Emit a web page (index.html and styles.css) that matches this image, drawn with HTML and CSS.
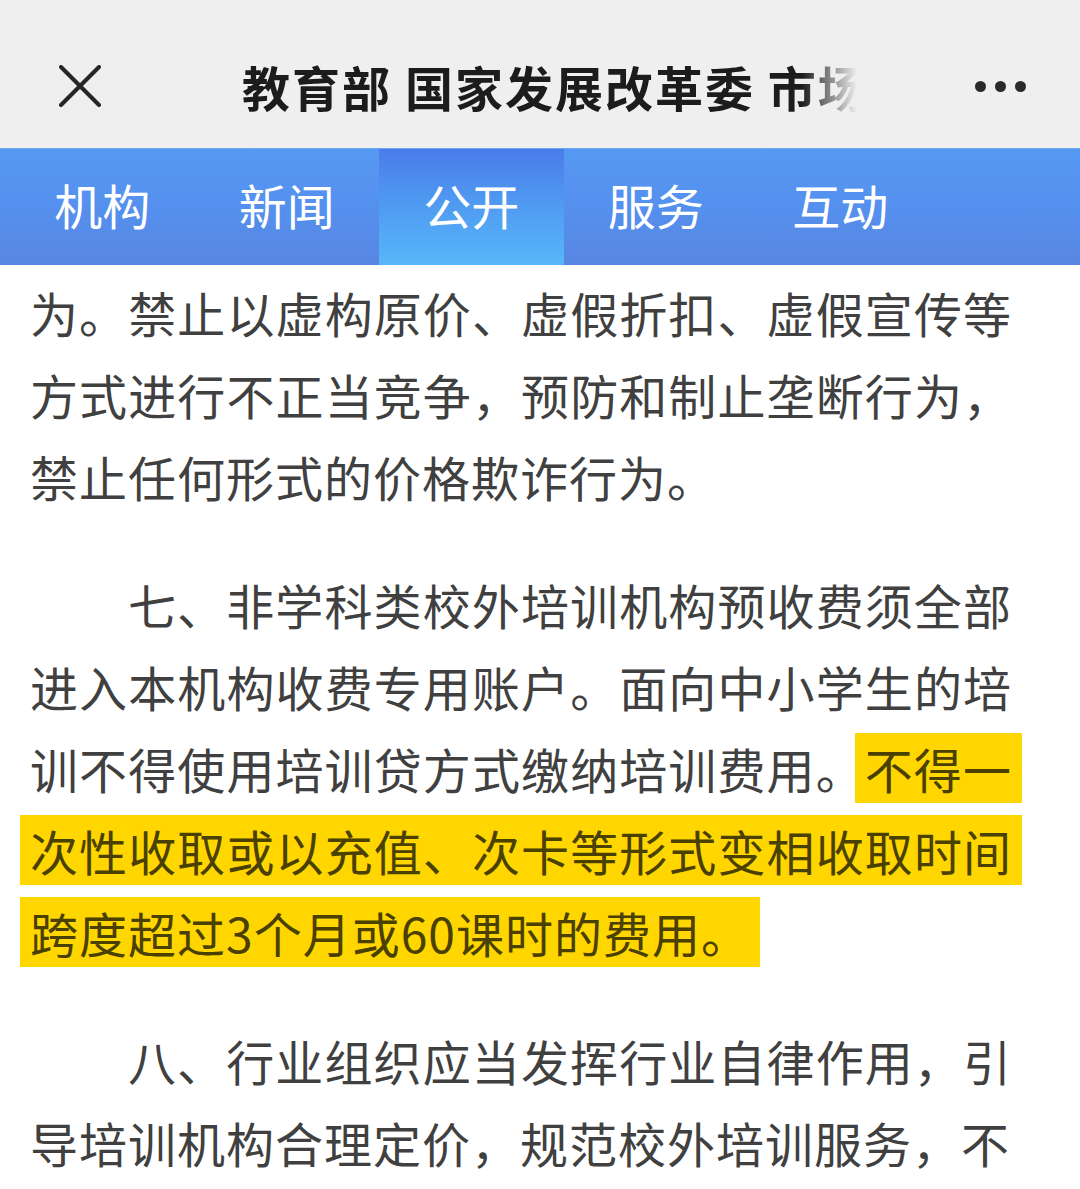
FILE: index.html
```html
<!DOCTYPE html>
<html lang="zh-CN">
<head>
<meta charset="utf-8">
<title>教育部 国家发展改革委 市场监管总局</title>
<link rel="stylesheet" href="styles.css">
</head>
<body>
<header class="topbar">
  <div class="close">
    <svg width="42" height="42" viewBox="0 0 42 42"><path d="M2 2 L40 40 M40 2 L2 40" stroke="#262626" stroke-width="4" stroke-linecap="round" fill="none"/></svg>
  </div>
  <div class="title">教育部 国家发展改革委 市场监管总局</div>
  <div class="more"><span></span><span></span><span></span></div>
</header>
<nav class="nav">
  <div class="tab">机构</div>
  <div class="tab">新闻</div>
  <div class="tab active">公开</div>
  <div class="tab">服务</div>
  <div class="tab">互动</div>
</nav>
<main class="article">
  <p>为。禁止以虚构原价、虚假折扣、虚假宣传等方式进行不正当竞争，预防和制止垄断行为，禁止任何形式的价格欺诈行为。</p>
  <p class="indent">七、非学科类校外培训机构预收费须全部进入本机构收费专用账户。面向中小学生的培训不得使用培训贷方式缴纳培训费用。<span class="mark">不得一次性收取或以充值、次卡等形式变相收取时间跨度超过3个月或60课时的费用。</span></p>
  <p class="indent">八、行业组织应当发挥行业自律作用，引导培训机构合理定价，规范校外培训服务，不</p>
</main>
</body>
</html>
```
FILE: styles.css
```css
html, body {
  margin: 0;
  padding: 0;
  background: #ffffff;
}
body {
  width: 1080px;
  height: 1189px;
  overflow: hidden;
  font-family: "Noto Sans CJK SC", "Noto Sans", sans-serif;
}
.topbar {
  height: 148px;
  box-sizing: border-box;
  padding-top: 30px;
  background: #efefef;
  display: flex;
  align-items: center;
}
.close {
  width: 42px;
  height: 42px;
  margin-left: 59px;
  margin-top: -6px;
  display: flex;
}
.title {
  margin-left: 141px;
  margin-top: -7px;
  width: 620px;
  white-space: nowrap;
  overflow: hidden;
  font-size: 48px;
  font-weight: 700;
  letter-spacing: 2px;
  color: #1c1c1c;
  -webkit-mask-image: linear-gradient(to right, #000 0, #000 560px, transparent 615px);
  mask-image: linear-gradient(to right, #000 0, #000 560px, transparent 615px);
}
.more {
  margin-left: auto;
  margin-right: 54px;
  margin-top: -6px;
  display: flex;
  gap: 9px;
}
.more span {
  width: 11px;
  height: 11px;
  border-radius: 50%;
  background: #2a2a2a;
}
.nav {
  height: 117px;
  box-sizing: border-box;
  padding-left: 10px;
  background: linear-gradient(to bottom, #5599f2 0%, #5590ee 50%, #5886e2 100%);
  border-top: 1px solid #6aa8f2;
  display: flex;
}
.tab {
  width: 184.5px;
  display: flex;
  align-items: center;
  justify-content: center;
  font-size: 48px;
  color: #ffffff;
  padding-bottom: 6px;
  box-sizing: border-box;
}
.tab.active {
  background: linear-gradient(to bottom, #4a7ce9 0%, #509cf2 50%, #57b6f8 100%);
}
.article {
  padding: 6px 0 0 30px;
  width: 982px;
}
.article p {
  margin: 0 0 46px;
  font-size: 48px;
  line-height: 82px;
  letter-spacing: 1px;
  color: #404040;
  text-align: justify;
}
.article p.indent {
  text-indent: 98px;
}
.mark {
  background: #ffd600;
  color: #4a4000;
  box-shadow: 10px 0 0 #ffd600, -10px 0 0 #ffd600;
  -webkit-box-decoration-break: clone;
  box-decoration-break: clone;
}
```
